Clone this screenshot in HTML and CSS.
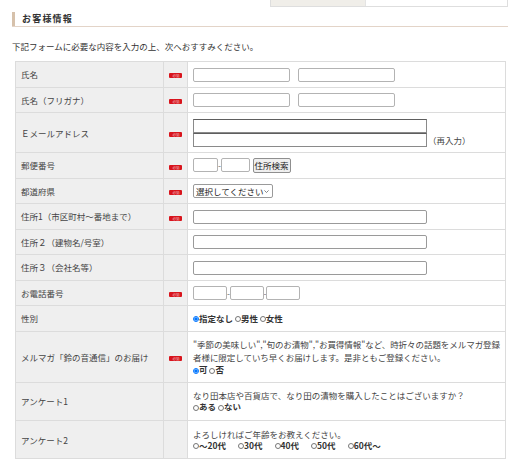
FILE: index.html
```html
<!DOCTYPE html>
<html lang="ja">
<head>
<meta charset="utf-8">
<title>お客様情報</title>
<link rel="stylesheet" href="styles.css">
</head>
<body>
<div class="topbox"><div class="tb-l"></div><div class="tb-r"></div></div>
<div class="wrap">
  <h2 class="heading"><span>お客様情報</span></h2>
  <p class="intro">下記フォームに必要な内容を入力の上、次へおすすみください。</p>
  <table class="form">
    <colgroup><col class="c1"><col class="c2"><col class="c3"></colgroup>
    <tr>
      <th>氏名</th>
      <td class="rq"><span class="req"><span>必須</span></span></td>
      <td><input type="text" class="in light w97"><input type="text" class="in light w97 ml8"></td>
    </tr>
    <tr>
      <th>氏名（フリガナ）</th>
      <td class="rq"><span class="req"><span>必須</span></span></td>
      <td><input type="text" class="in light w97"><input type="text" class="in light w97 ml8"></td>
    </tr>
    <tr class="r-mail">
      <th>Ｅメールアドレス</th>
      <td class="rq"><span class="req"><span>必須</span></span></td>
      <td>
        <div class="line"><input type="text" class="in dark wfull"></div>
        <div class="line"><input type="text" class="in dark wfull"><span class="again">（再入力）</span></div>
      </td>
    </tr>
    <tr>
      <th>郵便番号</th>
      <td class="rq"><span class="req"><span>必須</span></span></td>
      <td><div class="inline"><input type="text" class="in light wz1"><span class="hy">-</span><input type="text" class="in light wz2"><button type="button" class="btn">住所検索</button></div></td>
    </tr>
    <tr>
      <th>都道府県</th>
      <td class="rq"><span class="req"><span>必須</span></span></td>
      <td><div class="sel"><span>選択してください</span><svg class="chev" width="5" height="3" viewBox="0 0 5 3"><path d="M0.4 0.4 L2.5 2.5 L4.6 0.4" fill="none" stroke="#555" stroke-width="0.7"/></svg></div></td>
    </tr>
    <tr>
      <th>住所1（市区町村〜番地まで）</th>
      <td class="rq"><span class="req"><span>必須</span></span></td>
      <td><input type="text" class="in mid wfull"></td>
    </tr>
    <tr>
      <th>住所２（建物名/号室）</th>
      <td class="rq"></td>
      <td><input type="text" class="in mid wfull"></td>
    </tr>
    <tr>
      <th>住所３（会社名等）</th>
      <td class="rq"></td>
      <td><input type="text" class="in mid wfull"></td>
    </tr>
    <tr>
      <th>お電話番号</th>
      <td class="rq"><span class="req"><span>必須</span></span></td>
      <td><div class="inline"><input type="text" class="in light wt"><span class="hy">-</span><input type="text" class="in light wt"><span class="hy">-</span><input type="text" class="in light wt"></div></td>
    </tr>
    <tr>
      <th>性別</th>
      <td class="rq"></td>
      <td><div class="radios"><label><input type="radio" name="sex" checked>指定なし</label> <label><input type="radio" name="sex">男性</label> <label><input type="radio" name="sex">女性</label></div></td>
    </tr>
    <tr class="r-mag">
      <th>メルマガ「鈴の音通信」のお届け</th>
      <td class="rq"><span class="req"><span>必須</span></span></td>
      <td>
        <div class="note">"季節の美味しい","旬のお漬物","お買得情報"など、時折々の話題をメルマガ登録者様に限定していち早くお届けします。是非ともご登録ください。</div>
        <div class="radios"><label><input type="radio" name="mag" checked>可</label> <label><input type="radio" name="mag">否</label></div>
      </td>
    </tr>
    <tr class="r-q">
      <th>アンケート1</th>
      <td class="rq"></td>
      <td>
        <div class="qtext">なり田本店や百貨店で、なり田の漬物を購入したことはございますか？</div>
        <div class="radios"><label><input type="radio" name="q1">ある</label> <label><input type="radio" name="q1">ない</label></div>
      </td>
    </tr>
    <tr class="r-q">
      <th>アンケート2</th>
      <td class="rq"></td>
      <td>
        <div class="qtext">よろしければご年齢をお教えください。</div>
        <div class="radios wide"><label><input type="radio" name="q2">〜20代</label><label><input type="radio" name="q2">30代</label><label><input type="radio" name="q2">40代</label><label><input type="radio" name="q2">50代</label><label><input type="radio" name="q2">60代〜</label></div>
      </td>
    </tr>
  </table>
</div>
</body>
</html>
```

FILE: styles.css
```css
* { box-sizing: border-box; }
html, body { margin: 0; padding: 0; background: #fff; }
body {
  font-family: "Noto Sans CJK JP", "Noto Sans", sans-serif;
  font-size: 8.5px;
  color: #333;
}
.topbox {
  display: flex;
  margin-left: 270px;
  width: 238px;
  height: 7px;
  border: 1px solid #dedede;
  border-top: none;
}
.tb-l { width: 95px; background: #f0eee9; border-right: 1px solid #e4e4e4; }
.tb-r { flex: 1; background: #fff; }

.wrap { padding: 0 12px; }
.heading {
  margin: 5px 0 0;
  border-bottom: 1px solid #e3d4c8;
  font-size: 9px;
  font-weight: bold;
  letter-spacing: 1.2px;
  color: #333;
}
.heading span {
  display: block;
  border-left: 3px solid #d6c1ab;
  padding-left: 7px;
  line-height: 14px;
}
.intro { margin: 12.5px 0 0; line-height: 13px; }

table.form {
  margin: 8.5px 0 0 3px;
  width: 491px;
  border-collapse: collapse;
  table-layout: fixed;
}
col.c1 { width: 148px; }
col.c2 { width: 24px; }
th, td {
  border: 1px solid #dcdcdc;
  padding: 0 2px 0 5px;
  vertical-align: middle;
  height: 25.5px;
}
th {
  background: #efefef;
  text-align: left;
  font-weight: normal;
  color: #444;
  white-space: nowrap;
}
td { background: #fff; }
td.rq { background: #efefef; padding: 0; text-align: center; }
tr.r-mail th, tr.r-mail td { height: 40.2px; }
tr.r-mag th, tr.r-mag td { height: 51px; }
tr.r-q th, tr.r-q td { height: 38.3px; }

.req {
  display: inline-flex;
  align-items: center;
  justify-content: center;
  width: 13px;
  height: 5px;
  background: #d8141c;
  border-radius: 1px;
  overflow: hidden;
  vertical-align: middle;
}
.req span {
  font-size: 7px;
  line-height: 7px;
  color: rgba(255, 255, 255, 0.75);
  white-space: nowrap;
  transform: scale(0.5);
}

.in {
  display: inline-block;
  height: 14px;
  margin: 0;
  padding: 0 2px;
  background: #fff;
  border-radius: 2px;
  vertical-align: middle;
  font: inherit;
}
.light { border: 1px solid #b3b3b3; }
.mid { border: 1px solid #9a9a9a; }
.dark { border: 1px solid #8a8a8a; border-top-color: #5e5e5e; border-radius: 0; }
.w97 { width: 97px; }
.ml8 { margin-left: 8px; }
.wfull { width: 234px; }
.wz1 { width: 25px; }
.wz2 { width: 29px; }
.wt { width: 34px; }
.line { display: flex; align-items: center; height: 14px; }
.again { margin-left: 1px; color: #444; }
.inline { display: flex; align-items: center; }
.hy { width: 2.5px; overflow: hidden; text-align: center; color: #666; line-height: 14px; }
.btn {
  margin: 0 0 0 3px;
  height: 14.5px;
  padding: 0 1px;
  font: inherit;
  color: #222;
  background: #efefef;
  border: 1px solid #8f8f8f;
  border-radius: 2px;
  line-height: 12px;
}
.sel {
  display: inline-flex;
  align-items: center;
  width: 80px;
  height: 14px;
  padding: 0 0 0 2px;
  border: 1px solid #9a9a9a;
  border-radius: 2px;
  color: #222;
  vertical-align: middle;
}
.sel span { flex: 1; white-space: nowrap; }
.chev { margin-right: 3px; }

.radios { line-height: 11px; white-space: nowrap; }
.radios label { font-weight: bold; color: #333; }
.radios input {
  width: 6px;
  height: 6px;
  margin: 0;
  vertical-align: -0.5px;
}
.radios.wide { display: flex; gap: 12px; }
.note { line-height: 13.3px; color: #444; letter-spacing: -0.05px; }
.qtext { line-height: 11px; color: #444; }
```
